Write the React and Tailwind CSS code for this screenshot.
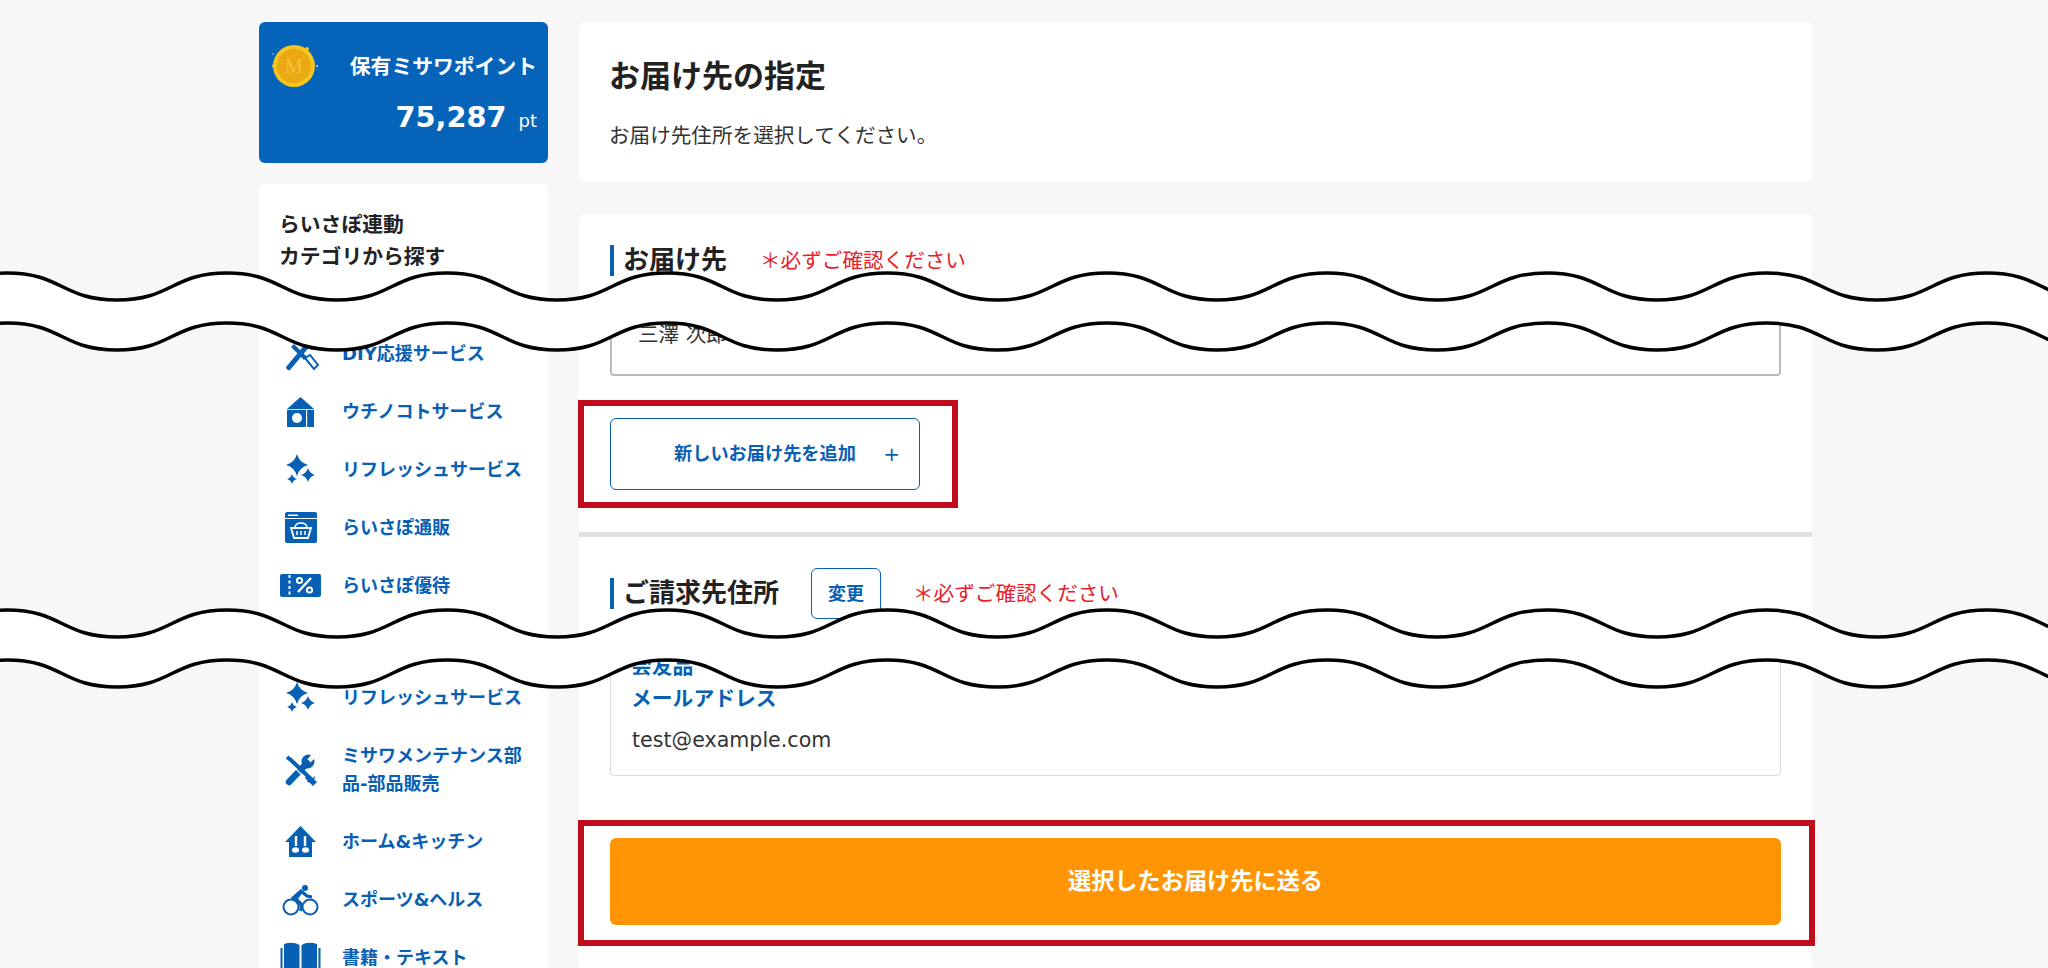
import React from "react";

const BLUE = "#0860b4";

// one wavy "page cut": two wave lines, white between them
function buildWave(y) {
  let d = `M-213 ${y}`;
  for (let x = -213; x < 2100; x += 220) {
    d += ` C${x + 55} ${y} ${x + 55} ${y + 27} ${x + 110} ${y + 27}`;
    d += ` C${x + 165} ${y + 27} ${x + 165} ${y} ${x + 220} ${y}`;
  }
  return d;
}

function PageCut({ className }) {
  const top = buildWave(4);
  const bottom = buildWave(54);
  return (
    <svg className={`absolute left-0 ${className}`} width="2048" height="90" viewBox="0 0 2048 90">
      <path d={`${top} L2300 4 L2300 54 L-213 54 Z`} fill="#fff" />
      <path d={bottom} fill="#fff" />
      <path d={top} fill="none" stroke="#000" strokeWidth="3.5" />
      <path d={bottom} fill="none" stroke="#000" strokeWidth="3.5" />
    </svg>
  );
}

function Star({ cx, cy, r }) {
  const k = r * 0.22;
  return (
    <path
      d={`M${cx} ${cy - r}Q${cx + k} ${cy - k} ${cx + r} ${cy}Q${cx + k} ${cy + k} ${cx} ${cy + r}Q${cx - k} ${cy + k} ${cx - r} ${cy}Q${cx - k} ${cy - k} ${cx} ${cy - r}Z`}
      fill={BLUE}
    />
  );
}

function Icon({ children }) {
  return (
    <svg width="41" height="40" viewBox="0 0 41 40" className="shrink-0">
      {children}
    </svg>
  );
}

const IconDiy = () => (
  <Icon>
    <path d="M6 33 L27 8 L31 11 L10 36 Q7 37 6 33Z" fill={BLUE} />
    <path d="M20 3 L35 12 L32 16 L18 7Z" fill={BLUE} />
    <path d="M14 10 L27 23 L24 26 L11 13Z" fill={BLUE} />
    <path d="M25 24 L30 21 L38 31 L34 35Z" fill="none" stroke={BLUE} strokeWidth="2" />
  </Icon>
);

const IconHouse = () => (
  <Icon>
    <path d="M20.5 5 L34 17 L34 35 L7 35 L7 17Z" fill={BLUE} />
    <circle cx="17" cy="26" r="5" fill="#fff" />
    <rect x="26" y="17" width="1.2" height="18" fill="#fff" />
    <rect x="7" y="17" width="27" height="0.8" fill="#fff" />
  </Icon>
);

const IconSparkle = () => (
  <Icon>
    <Star cx={17} cy={15} r={11} />
    <Star cx={28} cy={25} r={7} />
    <Star cx={12} cy={29} r={5} />
  </Icon>
);

const IconShop = () => (
  <Icon>
    <rect x="5" y="4" width="32" height="31" rx="2" fill={BLUE} />
    <rect x="5" y="10" width="32" height="1" fill="#fff" />
    <rect x="8" y="6.5" width="10" height="1.5" fill="#fff" />
    <path d="M11 20 L31 20 L28 30 L14 30Z" fill="none" stroke="#fff" strokeWidth="1.8" />
    <path d="M15 20 Q15 15 21 15 Q27 15 27 20 M17 23 V27 M21 23 V27 M25 23 V27" fill="none" stroke="#fff" strokeWidth="1.5" />
  </Icon>
);

const IconCoupon = () => (
  <Icon>
    <rect x="0" y="8" width="41" height="23" rx="2" fill={BLUE} />
    <path d="M9.5 9 V30" stroke="#fff" strokeWidth="2" strokeDasharray="3 2.5" />
    <path d="M18 26 L31 12" stroke="#fff" strokeWidth="2.4" />
    <circle cx="19.5" cy="14.5" r="2.6" fill="none" stroke="#fff" strokeWidth="2" />
    <circle cx="29.5" cy="24" r="2.6" fill="none" stroke="#fff" strokeWidth="2" />
  </Icon>
);

const IconTools = () => (
  <Icon>
    {/* screwdriver-ish arm, thin to the top left */}
    <path d="M7 7 L12 11 L32 30" fill="none" stroke={BLUE} strokeWidth="4" />
    <path d="M27 32 A6 6 0 0 0 35 26 L32 29 L29 27 Z" fill={BLUE} />
    <path d="M28 24 L37 32 L33 36 L25 28Z" fill={BLUE} />
    {/* wrench arm */}
    <path d="M9 32 L27 13" fill="none" stroke={BLUE} strokeWidth="6.5" strokeLinecap="round" />
    <path d="M22 14 A7 7 0 0 1 31 5 L27 10 L30 13 L34 9 A7 7 0 0 1 25 18Z" fill={BLUE} />
    <path d="M16 19 L22 25" stroke="#fff" strokeWidth="1.2" />
  </Icon>
);

const IconKitchen = () => (
  <Icon>
    <path d="M20.5 4 L36 20 L32 20 L32 35 L9 35 L9 20 L5 20Z" fill={BLUE} />
    <path d="M16 14 V24 M25 14 V24" stroke="#fff" strokeWidth="2.4" />
    <ellipse cx="15.5" cy="28" rx="3.5" ry="2.8" fill="#fff" />
    <ellipse cx="25.5" cy="28" rx="3.5" ry="2.8" fill="#fff" />
  </Icon>
);

const IconBike = () => (
  <Icon>
    <circle cx="11" cy="27" r="7.5" fill="none" stroke={BLUE} strokeWidth="2" />
    <circle cx="30" cy="27" r="7.5" fill="none" stroke={BLUE} strokeWidth="2" />
    <circle cx="25" cy="8" r="3" fill={BLUE} />
    <path d="M12 19 L21 11 L27 16 L32 17 M21 12 L16 19 L21 24 L21 31" fill="none" stroke={BLUE} strokeWidth="3.2" strokeLinejoin="round" />
  </Icon>
);

const IconBook = () => (
  <Icon>
    <path d="M4 6 Q13 3 19.5 7 V34 Q13 30 4 33Z" fill={BLUE} />
    <path d="M37 6 Q28 3 21.5 7 V34 Q28 30 37 33Z" fill={BLUE} />
    <path d="M1.5 10 V36 H39.5 V10" fill="none" stroke={BLUE} strokeWidth="2" />
  </Icon>
);

const itemsTop = [
  { icon: <IconDiy />, label: "DIY応援サービス" },
  { icon: <IconHouse />, label: "ウチノコトサービス" },
  { icon: <IconSparkle />, label: "リフレッシュサービス" },
  { icon: <IconShop />, label: "らいさぽ通販" },
  { icon: <IconCoupon />, label: "らいさぽ優待" },
];

const itemsBottom = [
  { icon: <IconSparkle />, label: "リフレッシュサービス" },
  { icon: <IconTools />, label: "ミサワメンテナンス部品-部品販売", tall: true },
  { icon: <IconKitchen />, label: "ホーム&キッチン" },
  { icon: <IconBike />, label: "スポーツ&ヘルス" },
  { icon: <IconBook />, label: "書籍・テキスト" },
];

function CategoryRow({ item }) {
  return (
    <li className={`flex items-center gap-[21px] ${item.tall ? "h-[86px]" : "h-[58px]"}`}>
      {item.icon}
      <span className="w-[186px] text-[18px] leading-[28px] font-bold text-[#0860b4]">{item.label}</span>
    </li>
  );
}

function SectionHeading({ children }) {
  return (
    <h2 className="border-l-4 border-[#0860b4] pl-[9px] h-[31px] flex items-center text-[26px] font-bold text-[#222]">
      {children}
    </h2>
  );
}

export default function App() {
  return (
    <div
      className="relative h-screen overflow-hidden bg-[#f7f7f7] pl-[259px] pt-[22px] flex gap-[31px] items-start text-[#222]"
      style={{ fontFamily: '"DejaVu Sans", "Noto Sans CJK JP", sans-serif' }}
    >
      {/* sidebar */}
      <aside className="w-[289px] shrink-0 flex flex-col gap-[21px]">
        <div className="h-[141px] rounded-md bg-[#0563b9] text-white relative pr-[11px] pt-[30px] text-right">
          <svg className="absolute left-[10px] top-[18px]" width="50" height="50" viewBox="0 0 50 50">
            <circle cx="25" cy="26" r="21" fill="#f6c520" />
            <circle cx="25" cy="26" r="17" fill="#eaa912" />
            <text x="25" y="33" textAnchor="middle" fontSize="20" fontFamily="Liberation Serif" fill="#f4c140">M</text>
            <circle cx="5" cy="26" r="2" fill="#f6c520" />
            <circle cx="38" cy="9" r="2" fill="#f6c520" />
            <circle cx="48" cy="26" r="1" fill="#cfe0f5" />
            <circle cx="4" cy="14" r="1" fill="#6aa5e0" />
          </svg>
          <p className="text-[20.8px] leading-[30px] font-bold">保有ミサワポイント</p>
          <p className="mt-[15px] leading-[40px]">
            <span className="text-[28.8px] font-bold">75,287</span>
            <span className="text-[18px] ml-[12px]">pt</span>
          </p>
        </div>

        <div className="rounded-md bg-white pl-[21px] pt-[25px] h-[900px]">
          <h2 className="-ml-px text-[20.8px] leading-[32px] font-bold text-[#222]">
            らいさぽ連動
            <br />
            カテゴリから探す
          </h2>
          <ul className="mt-[52px]">
            {itemsTop.map(item => <CategoryRow key={item.label} item={item} />)}
          </ul>
          <ul className="mt-[54px]">
            {itemsBottom.map(item => <CategoryRow key={item.label} item={item} />)}
          </ul>
        </div>
      </aside>

      {/* main */}
      <main className="w-[1233px] shrink-0 flex flex-col gap-[32px]">
        <section className="h-[160px] rounded-md bg-white px-[31px] pt-[32px]">
          <h1 className="-ml-px text-[31px] leading-[44px] font-bold text-[#222]">お届け先の指定</h1>
          <p className="-ml-px mt-[22px] text-[20.6px] leading-[32px] text-[#333]">お届け先住所を選択してください。</p>
        </section>

        <section className="rounded-md bg-white pt-[31px] h-[900px]">
          <div className="px-[31px]">
            <div className="flex items-center h-[31px]">
              <SectionHeading>お届け先</SectionHeading>
              <span className="ml-[33px] pt-px leading-[28px] text-[20.6px] text-[#e8202a]">＊必ずご確認ください</span>
            </div>
            <div className="mt-[30px] h-[70px] rounded border-2 border-[#bbbbbb] pl-[26px] pt-[13px] text-[20.6px] leading-[28px] text-[#333]">
              三澤 次郎
            </div>
          </div>

          <div className="mt-[24px] -ml-px w-[380px] h-[108px] border-[6px] border-[#c00d1e] pl-[26px] pt-[12px]">
            <button className="relative w-[310px] h-[72px] rounded-md border border-[#0860b4] bg-white font-bold text-[#0860b4] flex items-center pl-[63px]">
              <span className="text-[18.2px]">新しいお届け先を追加</span>
              <span className="absolute right-[19px] text-[20px] font-normal">+</span>
            </button>
          </div>

          <div className="mt-[24px] h-[5px] bg-[#e0e0e0]" />

          <div className="px-[31px] mt-[31px]">
            <div className="flex items-center h-[51px]">
              <SectionHeading>ご請求先住所</SectionHeading>
              <button className="ml-[32px] w-[70px] h-[51px] rounded-md border border-[#0860b4] text-[18px] font-bold text-[#0860b4]">変更</button>
              <span className="ml-[32px] pt-px leading-[28px] text-[20.6px] text-[#e8202a]">＊必ずご確認ください</span>
            </div>
            <div className="mt-[21px] rounded border border-[#dddddd] pl-[21px] pt-[12px] pb-[21px] text-[20.8px] leading-[28px]">
              <p className="-ml-px font-bold text-[#0860b4]">会友品</p>
              <p className="-ml-px mt-[4px] font-bold text-[#0860b4]">メールアドレス</p>
              <p className="mt-[13px] text-[#333] text-[20.6px]">test@example.com</p>
            </div>
          </div>

          <div className="mt-[44px] -ml-px w-[1237px] h-[126px] border-[6px] border-[#c00d1e] pl-[26px] pt-[12px]">
            <button className="w-[1171px] h-[87px] rounded-md bg-[#ff9505] text-[23.2px] font-bold text-white">
              選択したお届け先に送る
            </button>
          </div>
        </section>
      </main>

      <PageCut className="top-[269px]" />
      <PageCut className="top-[606px]" />
    </div>
  );
}
